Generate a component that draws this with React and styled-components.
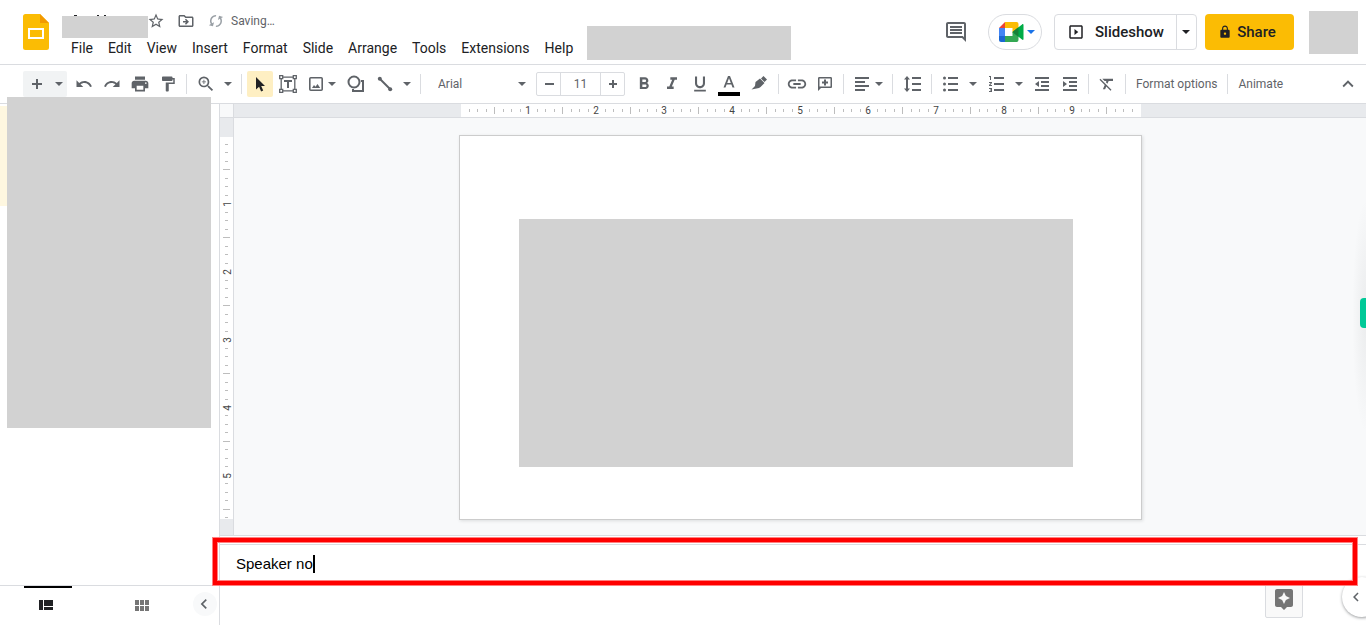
import React from "react";
import styled, { createGlobalStyle } from "styled-components";
import {
  MdUndo, MdRedo, MdPrint, MdFormatPaint, MdZoomIn, MdStarBorder,
  MdOutlineDriveFileMove, MdSync, MdInsertLink, MdFormatClear,
  MdKeyboardArrowUp, MdKeyboardArrowLeft, MdLock, MdSlideshow,
  MdOutlineComment, MdAssistant, MdFormatBold, MdFormatItalic,
  MdFormatUnderlined,
} from "react-icons/md";

const GlobalStyle = createGlobalStyle`
  *, *::before, *::after { box-sizing: border-box; }
  body { margin: 0; background: #fff; font-family: Roboto, "Liberation Sans", sans-serif; overflow: hidden; }
  button, input, select { font: inherit; color: inherit; margin: 0; }
  svg { display: block; flex: none; }
`;

const Page = styled.div`
  display: flex;
  flex-direction: column;
  min-height: 100vh;
  color: #202124;
`;

/* ---------- header ---------- */
const Header = styled.header`
  display: flex;
  height: 65px;
  padding: 0 8px 0 23px;
  border-bottom: 1px solid #dadce0;
`;
const Logo = styled.a`
  margin: 14px 12px 0 0;
`;
const TitleArea = styled.div`
  display: flex;
  flex-direction: column;
`;
const TitleRow = styled.div`
  display: flex;
  align-items: center;
  height: 37px;
  padding: 5px 0 0 1px;
  color: #5f6368;
  font-size: 12px;
`;
const Title = styled.div`
  align-self: flex-end;
  width: 86px;
  margin-bottom: -1px;
`;
const Redacted = styled.div`
  background: #d2d2d2;
  width: ${(p) => p.$w}px;
  height: ${(p) => p.$h}px;
`;
const BareButton = styled.button`
  display: flex;
  align-items: center;
  justify-content: center;
  padding: 0;
  border: 0;
  background: none;
  cursor: pointer;
`;
const TitleButton = styled(BareButton)`
  width: 30px;
  height: 24px;
`;
const StarButton = styled(TitleButton)`
  width: 16px;
  margin-right: 7px;
`;
const Status = styled.span`
  display: flex;
  align-items: center;
  gap: 6px;
  padding-left: 6px;
`;
const SyncIcon = styled(MdSync)`
  color: #9aa0a6;
  transform: rotate(60deg);
`;
const Menus = styled.nav`
  display: flex;
  gap: 1px;
  padding-left: 3px;
`;
const Menu = styled(BareButton)`
  height: 22px;
  padding: 0 7px;
  font-size: 14px;
`;
const HeaderNote = styled(Redacted)`
  margin: 26px 0 0 7px;
`;
const HeaderActions = styled.div`
  display: flex;
  align-items: center;
  height: 64px;
  margin-left: auto;
  color: #202124;
`;
const CommentButton = styled(BareButton)`
  width: 40px;
  height: 40px;
  margin-right: 12px;
  color: #5f6368;
`;
const MeetButton = styled(BareButton)`
  gap: 3px;
  width: 54px;
  height: 36px;
  margin-right: 12px;
  padding-left: 4px;
  border: 1px solid #dadce0;
  border-radius: 18px;
  color: #1a73e8;
`;
const SlideshowGroup = styled.div`
  display: flex;
  width: 143px;
  height: 36px;
  margin-right: 8px;
  border: 1px solid #dadce0;
  border-radius: 4px;
`;
const SlideshowButton = styled(BareButton)`
  flex: 1;
  gap: 10px;
  font-size: 15px;
  font-weight: 500;
`;
const SlideshowMore = styled(BareButton)`
  width: 20px;
  padding-right: 1px;
  border-left: 1px solid #dadce0;
`;
const ShareButton = styled(BareButton)`
  gap: 5px;
  width: 89px;
  height: 36px;
  margin-right: 15px;
  padding-right: 5px;
  border-radius: 4px;
  background: #fbbc04;
  font-size: 15px;
  font-weight: 500;
`;

/* ---------- toolbar ---------- */
const Toolbar = styled.div`
  display: flex;
  align-items: center;
  height: 39px;
  padding: 0 4px 0 23px;
  border-bottom: 1px solid #dadce0;
  color: #5f6368;
  font-size: 12px;
  white-space: nowrap;
`;
const NewSlide = styled.div`
  display: flex;
  height: 26px;
  margin-right: 3px;
  border-radius: 2px;
  background: #f1f3f4;
`;
const Tool = styled(BareButton)`
  width: ${(p) => (p.$wide ? 30 : 28)}px;
  height: 26px;
  flex: none;
  color: ${(p) => (p.$on ? "#202124" : "#5f6368")};
  ${(p) => p.$on && "width: 26px; margin: 0 1px; border-radius: 2px; background: #feefc3;"}
`;
const DropTool = styled(BareButton)`
  width: 16px;
  height: 26px;
  flex: none;
`;
const Split = styled.div`
  display: flex;
  padding: 0 1px;
`;
const MenuTool = styled(BareButton)`
  gap: 4px;
  width: 40px;
  height: 26px;
  flex: none;
`;
const Divider = styled.span`
  width: 1px;
  height: 20px;
  margin: 0 4px;
  flex: none;
  background: #dadce0;
`;
const FontPicker = styled.label`
  display: flex;
  align-items: center;
  width: 107px;
  margin-right: 4px;
  padding: 0 6px 0 13px;
`;
const FontSelect = styled.select`
  flex: 1;
  min-width: 0;
  padding: 0;
  border: 0;
  appearance: none;
  background: none;
`;
const SizeBox = styled.div`
  display: flex;
  width: 89px;
  height: 24px;
  margin-right: 5px;
  border: 1px solid #dadce0;
  border-radius: 2px;
`;
const SizeButton = styled(BareButton)`
  width: 23px;
`;
const SizeInput = styled.input`
  width: 41px;
  padding: 0;
  border: solid #dadce0;
  border-width: 0 1px;
  text-align: center;
`;
const ColorTool = styled(Tool)`
  position: relative;
  &::after {
    content: "";
    position: absolute;
    left: 4px;
    right: 4px;
    bottom: 1px;
    height: 4px;
    background: #000;
  }
`;
const TextTool = styled(BareButton)`
  height: 26px;
  padding: 0 6px;
`;
const CollapseTool = styled(Tool)`
  margin-left: auto;
`;

/* ---------- workspace ---------- */
const Workspace = styled.div`
  display: flex;
  flex: 1;
  position: relative;
`;
const Sidebar = styled.aside`
  display: flex;
  flex-direction: column;
  width: 220px;
  flex: none;
  border-right: 1px solid #dadce0;
`;
const Filmstrip = styled.div`
  flex: 1;
  position: relative;
  padding-top: 2px;
`;
const SelectedRow = styled.div`
  width: 207px;
  height: 100px;
  background: #fef7e0;
`;
const FilmstripCover = styled(Redacted)`
  position: absolute;
  top: -7px;
  left: 7px;
`;
const SidebarFooter = styled.div`
  display: flex;
  height: 40px;
  padding-left: 24px;
  border-top: 1px solid #dadce0;
`;
const ViewTab = styled(BareButton)`
  width: 48px;
  margin-right: 48px;
  padding: 0 4px 3px 0;
  border-top: 2px solid ${(p) => (p.$on ? "#000" : "transparent")};
  color: ${(p) => (p.$on ? "#202124" : "#757575")};
  & + & { margin-right: 0; }
`;
const HideStrip = styled(BareButton)`
  width: 24px;
  height: 24px;
  margin: 6px 2px 0 auto;
  padding-right: 2px;
  border-radius: 50%;
  background: #f8f9fa;
  color: #5f6368;
`;
const Main = styled.main`
  display: flex;
  flex: 1;
  min-width: 0;
  flex-direction: column;
`;
const RulerRow = styled.div`
  display: flex;
  height: 14px;
  border-bottom: 1px solid #dadce0;
`;
const Corner = styled.div`
  width: 14px;
  flex: none;
  border-right: 1px solid #dadce0;
  background: #f8f9fa;
`;
const RulerTrack = styled.div`
  display: flex;
  flex-direction: ${(p) => (p.$vertical ? "column" : "row")};
  justify-content: center;
  flex: ${(p) => (p.$vertical ? "none" : 1)};
  width: ${(p) => (p.$vertical ? "14px" : "auto")};
  padding: ${(p) => (p.$vertical ? "2px 0 0" : "0 0 0 2px")};
  border-right: ${(p) => (p.$vertical ? "1px solid #dadce0" : "0")};
  background: #e8eaed;
`;
const RulerScale = styled.div`
  display: flex;
  flex: none;
  flex-direction: ${(p) => (p.$vertical ? "column" : "row")};
  ${(p) => (p.$vertical ? "height: 382px" : "width: 680px")};
  background: #fff;
`;
const RulerCell = styled.div`
  display: flex;
  flex: 1;
  min-width: 0;
  min-height: 0;
  flex-direction: ${(p) => (p.$vertical ? "column" : "row")};
  align-items: center;
  justify-content: flex-end;
`;
const Tick = styled.span`
  flex: none;
  background: #bdbdbd;
  width: ${(p) => (p.$vertical ? (p.$major ? 7 : 3) : 1)}px;
  height: ${(p) => (p.$vertical ? 1 : p.$major ? 7 : 3)}px;
`;
const RulerLabel = styled.span`
  display: flex;
  align-items: center;
  justify-content: center;
  flex: none;
  font-size: 10px;
  line-height: 12px;
  color: #444;
  ${(p) => (p.$vertical ? "height: 0; margin-left: 3px; transform: rotate(-90deg);" : "width: 2px;")}
`;
const CanvasRow = styled.div`
  display: flex;
  flex: 1;
  min-height: 400px;
  border-bottom: 1px solid #dadce0;
`;
const Canvas = styled.div`
  display: flex;
  flex: 1;
  align-items: center;
  justify-content: center;
  padding-top: 2px;
  background: #f8f9fa;
`;
const Slide = styled.section`
  width: 683px;
  height: 385px;
  margin-left: 1px;
  padding: 83px 59px;
  border: 1px solid #ccc;
  background: #fff;
  box-shadow: 1px 1px 3px rgba(60, 64, 67, 0.15);
`;
const Splitter = styled.div`
  height: 9px;
  border-bottom: 1px solid #dadce0;
`;
const Notes = styled.div`
  display: flex;
  align-items: flex-start;
  height: 80px;
  padding: 10px 16px;
`;
const NotesInput = styled.input`
  field-sizing: content;
  height: 18px;
  padding: 0;
  border: 0;
  outline: 0;
  color: #000;
  font-family: "Liberation Sans", sans-serif;
  font-size: 15px;
  line-height: 18px;
`;
const Caret = styled.span`
  width: 2px;
  height: 18px;
  background: #000;
`;
const Highlight = styled.div`
  position: absolute;
  left: 213px;
  right: 9px;
  bottom: 40px;
  height: 47px;
  border: 4px solid #f00;
  box-shadow: 0 0 0 1px #ff8080, inset 0 0 0 1px #ff8080;
  pointer-events: none;
`;
const ExploreButton = styled(BareButton)`
  position: absolute;
  right: 63px;
  bottom: 7px;
  width: 38px;
  height: 38px;
  border: 1px solid #dadce0;
  border-radius: 2px;
  background: #f9f9f9;
  color: #757575;
`;
const PanelClip = styled.div`
  position: absolute;
  right: 0;
  bottom: 0;
  width: 32px;
  height: 56px;
  overflow: hidden;
`;
const PanelButton = styled(BareButton)`
  justify-content: flex-start;
  width: 40px;
  height: 40px;
  margin: 8px 0 0 8px;
  padding-left: 5px;
  border-radius: 50%;
  background: #fff;
  color: #5f6368;
  box-shadow: 0 1px 3px rgba(60, 64, 67, 0.5);
`;
const EdgeShade = styled.div`
  position: absolute;
  right: 0;
  top: 94px;
  width: 14px;
  height: 236px;
  background: radial-gradient(ellipse at right, rgba(60, 64, 67, 0.07), transparent 70%);
`;
const EdgeTab = styled.button`
  position: absolute;
  right: 0;
  top: 194px;
  width: 6px;
  height: 30px;
  padding: 0;
  border: 0;
  border-radius: 4px 0 0 4px;
  background: #00c997;
`;

/* ---------- drawings ---------- */
const Arrow = () => (
  <svg width="8" height="4" viewBox="0 0 8 4" aria-hidden="true"><path d="M0 0h8L4 4z" fill="currentColor" /></svg>
);
const Icon = ({ d }) => (
  <svg width="18" height="18" viewBox="0 0 18 18" aria-hidden="true"><path d={d} fill="currentColor" fillRule="evenodd" /></svg>
);
const ICONS = {
  plus: "M8 4h2v4h4v2h-4v4H8v-4H4V8h4z",
  smallPlus: "M8 5h2v3h3v2h-3v3H8v-3H5V8h3z",
  minus: "M5 8h9v2H5z",
  alignLeft: "M2 2h14v2H2zM2 6h10v2H2zM2 10h14v2H2zM2 14h10v2H2z",
  lineSpacing: "M4 1L7 4.500H5v9h2L4 17 1 13.500h2v-9H1zM9 2h9v2H9zM9 8h9v2H9zM9 14h9v2H9z",
  bullets: "M1 3a1.500 1.500 0 1 1 3 0 1.500 1.500 0 0 1-3 0zM1 9a1.500 1.500 0 1 1 3 0 1.500 1.500 0 0 1-3 0zM1 15a1.500 1.500 0 1 1 3 0 1.500 1.500 0 0 1-3 0zM6 2h10v2H6zM6 8h10v2H6zM6 14h10v2H6z",
  numbers: "M1 1h2v4H2V2H1zM1 7h3v1L2.300 10H4v1H1v-1l1.700-2H1zM1 13h3v4H1v-1h2v-.5H2v-1h1V14H1zM6 2h10v2H6zM6 8h10v2H6zM6 14h10v2H6z",
  outdent: "M2 2h14v2H2zM8 6h8v2H8zM8 10h8v2H8zM2 14h14v2H2zM2 9l4-3v6z",
  indent: "M2 2h14v2H2zM8 6h8v2H8zM8 10h8v2H8zM2 14h14v2H2zM6 9L2 6v6z",
  pointer: "M5 2v12.500l3.100-2.700 2 4.600 2.100-.9-2-4.500H14z",
  marker: "M11 3.500l2.500-2.500 3.500 3.500-2.500 2.500zM5.500 7L10 3.500 14.500 8 10.500 12 9 13 1.500 14.500 5 11z",
  addComment: "M3.300 2h11.400c.8 0 1.300.6 1.300 1.300v8.400c0 .8-.5 1.300-1.300 1.300H5l-3 3V3.300C2 2.600 2.500 2 3.300 2zm.2 1.500v8h11v-8zM8 4.500h2v2h2v2h-2v2H8v-2H6v-2h2z",
};
const SlidesLogo = () => (
  <svg width="26" height="36" viewBox="0 0 26 36">
    <path d="M2.500 0H17l9 9v24.500a2.500 2.500 0 0 1-2.500 2.500h-21A2.500 2.500 0 0 1 0 33.500v-31A2.500 2.500 0 0 1 2.500 0z" fill="#fbbc04" />
    <path d="M17 0l9 9h-9z" fill="#f29900" />
    <path d="M5 14v11h16V14zm2 2h12v7H7z" fill="#fff" fillRule="evenodd" />
  </svg>
);
const TitleTips = () => (
  <svg width="86" height="1" viewBox="0 0 86 1" aria-hidden="true">
    <path d="M12 0h3v1h-3zM35 0h2v1h-2zM42 0h2v1h-2z" fill="#202124" />
  </svg>
);
const MeetLogo = () => (
  <svg width="25" height="20" viewBox="0 0 25 20">
    <path d="M6 0L0 6h6z" fill="#ea4335" />
    <path d="M0 6h6v8H0z" fill="#4285f4" />
    <path d="M0 14h6v6H2a2 2 0 0 1-2-2z" fill="#1967d2" />
    <path d="M6 0h11.500a2 2 0 0 1 2 2v5l-6 4V6H6z" fill="#fbbc04" />
    <path d="M6 14h7.500v-4l6 3v5a2 2 0 0 1-2 2H6z" fill="#34a853" />
    <path d="M13.500 10l9.500-7.600c.8-.6 1.500-.3 1.500.6v14c0 .9-.7 1.200-1.500.6z" fill="#00ac47" />
    <path d="M13.500 10l6-4.800v9.600z" fill="#188038" />
  </svg>
);
const TextBoxIcon = () => (
  <svg width="18" height="18" viewBox="0 0 18 18" fill="none" stroke="currentColor" strokeWidth="1.300">
    <path d="M4 2.200h10M4 15.800h10M2.200 4v10M15.800 4v10" />
    <path d="M.7.7h3v3h-3zM14.300.7h3v3h-3zM.7 14.300h3v3h-3zM14.300 14.300h3v3h-3z" />
    <path d="M5 6h8M9 6v7" strokeWidth="2" />
  </svg>
);
const ImageIcon = () => (
  <svg width="16" height="18" viewBox="0 0 16 18">
    <rect x="1.800" y="2.800" width="12.400" height="12.400" rx="1" fill="none" stroke="currentColor" strokeWidth="1.600" />
    <path d="M4 13l2-3 1.500 1.700L9.500 9l2.700 4z" fill="currentColor" />
  </svg>
);
const ShapeIcon = () => (
  <svg width="18" height="18" viewBox="0 0 18 18" fill="none" stroke="currentColor" strokeWidth="2">
    <circle cx="7" cy="7" r="5.500" />
    <path d="M14 6h2v10H6v-2" />
  </svg>
);
const LineIcon = () => (
  <svg width="18" height="18" viewBox="0 0 18 18">
    <path d="M4 4l10 10" stroke="currentColor" strokeWidth="2" />
    <circle cx="3.800" cy="3.800" r="2" fill="currentColor" />
    <circle cx="14.200" cy="14.200" r="2" fill="currentColor" />
  </svg>
);
const LetterAIcon = () => (
  <svg width="16" height="18" viewBox="0 0 16 18">
    <path d="M7 1h2l4.500 11.500h-2l-1.100-3H5.600l-1.100 3h-2zm1 2.200L6.200 8h3.600z" fill="currentColor" />
  </svg>
);
const FilmstripIcon = () => (
  <svg width="14" height="10" viewBox="0 0 14 10"><path d="M0 0h4v10H0zM5 0h9v6H5zM5 7h9v3H5z" fill="currentColor" /></svg>
);
const GridIcon = () => (
  <svg width="14" height="11" viewBox="0 0 14 11">
    <path d="M0 0h4v5H0zM5 0h4v5H5zM10 0h4v5h-4zM0 6h4v5H0zM5 6h4v5H5zM10 6h4v5h-4z" fill="currentColor" />
  </svg>
);

const MENUS = ["File", "Edit", "View", "Insert", "Format", "Slide", "Arrange", "Tools", "Extensions", "Help"];

function Ruler({ cells, vertical }) {
  return (
    <RulerTrack $vertical={vertical}>
      <RulerScale $vertical={vertical}>
        {Array.from({ length: cells }, (_, i) => {
          const n = i + 1;
          let mark = <Tick $vertical={vertical} $major={n % 4 === 0} />;
          if (n % 8 === 0) mark = <RulerLabel $vertical={vertical}>{n / 8}</RulerLabel>;
          if (n === 80) mark = null;
          return <RulerCell key={n} $vertical={vertical}>{mark}</RulerCell>;
        })}
      </RulerScale>
    </RulerTrack>
  );
}

function SplitTool({ label, children }) {
  return (
    <Split>
      <Tool aria-label={label}>{children}</Tool>
      <DropTool aria-label={`${label} options`}><Arrow /></DropTool>
    </Split>
  );
}

export default function App() {
  return (
    <Page>
      <GlobalStyle />
      <Header>
        <Logo href="#" aria-label="Slides home"><SlidesLogo /></Logo>
        <TitleArea>
          <TitleRow>
            <Title><TitleTips /><Redacted $w={86} $h={22} /></Title>
            <StarButton aria-label="Star"><MdStarBorder size={18} /></StarButton>
            <TitleButton aria-label="Move"><MdOutlineDriveFileMove size={18} /></TitleButton>
            <Status><SyncIcon size={18} />Saving…</Status>
          </TitleRow>
          <Menus>{MENUS.map((m) => <Menu key={m}>{m}</Menu>)}</Menus>
        </TitleArea>
        <HeaderNote $w={204} $h={34} />
        <HeaderActions>
          <CommentButton aria-label="Comments"><MdOutlineComment size={24} /></CommentButton>
          <MeetButton aria-label="Join a call"><MeetLogo /><Arrow /></MeetButton>
          <SlideshowGroup>
            <SlideshowButton><MdSlideshow size={18} />Slideshow</SlideshowButton>
            <SlideshowMore aria-label="Slideshow options"><Arrow /></SlideshowMore>
          </SlideshowGroup>
          <ShareButton><MdLock size={14} />Share</ShareButton>
          <Redacted $w={49} $h={43} />
        </HeaderActions>
      </Header>

      <Toolbar>
        <NewSlide>
          <Tool aria-label="New slide"><Icon d={ICONS.plus} /></Tool>
          <DropTool aria-label="New slide with layout"><Arrow /></DropTool>
        </NewSlide>
        <Tool aria-label="Undo"><MdUndo size={18} /></Tool>
        <Tool aria-label="Redo"><MdRedo size={18} /></Tool>
        <Tool aria-label="Print"><MdPrint size={20} /></Tool>
        <Tool aria-label="Paint format"><MdFormatPaint size={18} /></Tool>
        <Divider />
        <SplitTool label="Zoom"><MdZoomIn size={20} /></SplitTool>
        <Divider />
        <Tool $on aria-label="Select"><Icon d={ICONS.pointer} /></Tool>
        <Tool aria-label="Text box"><TextBoxIcon /></Tool>
        <MenuTool aria-label="Insert image"><ImageIcon /><Arrow /></MenuTool>
        <Tool aria-label="Shape"><ShapeIcon /></Tool>
        <SplitTool label="Line"><LineIcon /></SplitTool>
        <Divider />
        <FontPicker>
          <FontSelect aria-label="Font" defaultValue="Arial"><option>Arial</option></FontSelect>
          <Arrow />
        </FontPicker>
        <SizeBox>
          <SizeButton aria-label="Decrease font size"><Icon d={ICONS.minus} /></SizeButton>
          <SizeInput aria-label="Font size" defaultValue="11" />
          <SizeButton aria-label="Increase font size"><Icon d={ICONS.smallPlus} /></SizeButton>
        </SizeBox>
        <Tool aria-label="Bold"><MdFormatBold size={20} /></Tool>
        <Tool aria-label="Italic"><MdFormatItalic size={20} /></Tool>
        <Tool aria-label="Underline"><MdFormatUnderlined size={20} /></Tool>
        <ColorTool $wide aria-label="Text color"><LetterAIcon /></ColorTool>
        <Tool $wide aria-label="Highlight color"><Icon d={ICONS.marker} /></Tool>
        <Divider />
        <Tool aria-label="Insert link"><MdInsertLink size={22} /></Tool>
        <Tool aria-label="Add comment"><Icon d={ICONS.addComment} /></Tool>
        <Divider />
        <MenuTool aria-label="Align"><Icon d={ICONS.alignLeft} /><Arrow /></MenuTool>
        <Divider />
        <Tool $wide aria-label="Line spacing"><Icon d={ICONS.lineSpacing} /></Tool>
        <Divider />
        <SplitTool label="Bulleted list"><Icon d={ICONS.bullets} /></SplitTool>
        <SplitTool label="Numbered list"><Icon d={ICONS.numbers} /></SplitTool>
        <Tool aria-label="Decrease indent"><Icon d={ICONS.outdent} /></Tool>
        <Tool aria-label="Increase indent"><Icon d={ICONS.indent} /></Tool>
        <Divider />
        <Tool aria-label="Clear formatting"><MdFormatClear size={18} /></Tool>
        <Divider />
        <TextTool>Format options</TextTool>
        <Divider />
        <TextTool>Animate</TextTool>
        <CollapseTool aria-label="Hide the menus"><MdKeyboardArrowUp size={22} /></CollapseTool>
      </Toolbar>

      <Workspace>
        <Sidebar>
          <Filmstrip>
            <SelectedRow />
            <FilmstripCover $w={204} $h={331} />
          </Filmstrip>
          <SidebarFooter>
            <ViewTab $on aria-label="Filmstrip view"><FilmstripIcon /></ViewTab>
            <ViewTab aria-label="Grid view"><GridIcon /></ViewTab>
            <HideStrip aria-label="Hide filmstrip"><MdKeyboardArrowLeft size={20} /></HideStrip>
          </SidebarFooter>
        </Sidebar>
        <Main>
          <RulerRow>
            <Corner />
            <Ruler cells={80} />
          </RulerRow>
          <CanvasRow>
            <Ruler cells={45} vertical />
            <Canvas>
              <Slide><Redacted $w={554} $h={248} /></Slide>
            </Canvas>
          </CanvasRow>
          <Splitter />
          <Notes>
            <NotesInput aria-label="Speaker notes" defaultValue="Speaker no" />
            <Caret />
          </Notes>
        </Main>
        <EdgeShade />
        <EdgeTab aria-label="Open side panel" />
        <ExploreButton aria-label="Explore"><MdAssistant size={24} /></ExploreButton>
        <PanelClip>
          <PanelButton aria-label="Show side panel"><MdKeyboardArrowLeft size={18} /></PanelButton>
        </PanelClip>
        <Highlight />
      </Workspace>
    </Page>
  );
}
